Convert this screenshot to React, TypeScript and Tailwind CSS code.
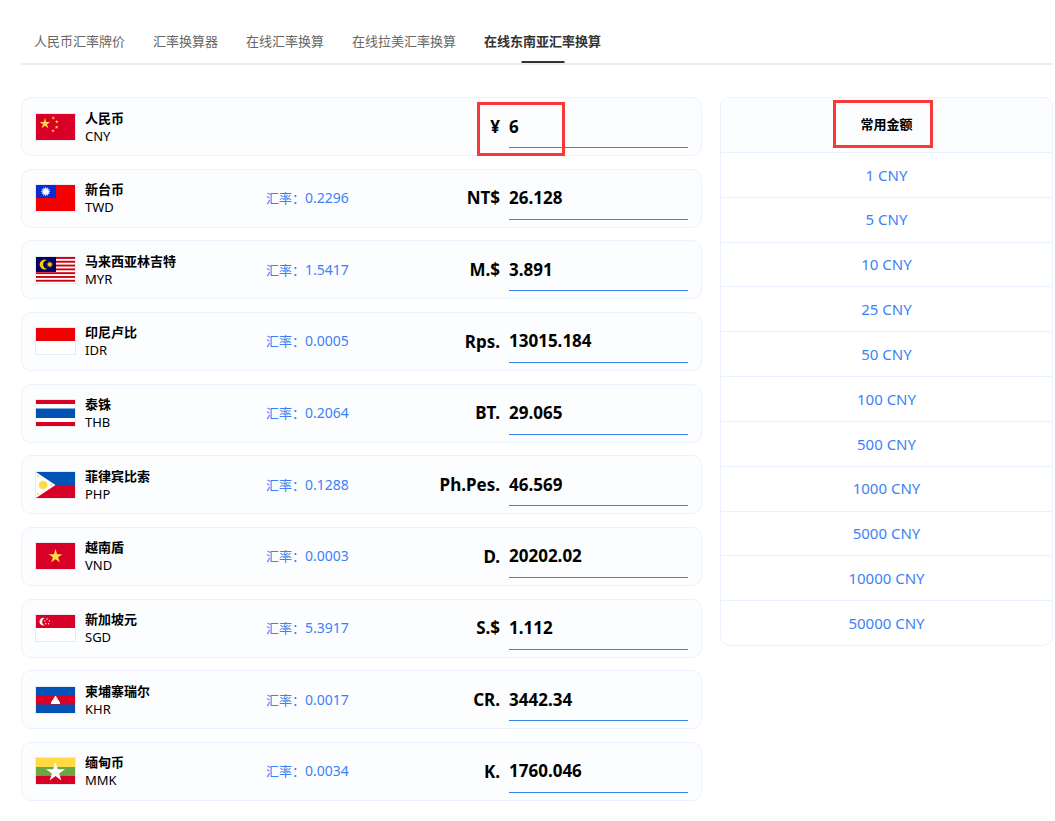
import { useState, type ReactNode } from 'react'

type Currency = {
  code: string
  name: string
  symbol: string
  rate?: string
  // value of 6 CNY in this currency
  base: number
}

const BASE_CODE = 'CNY'

const currencies: Currency[] = [
  { code: 'CNY', name: '人民币', symbol: '¥', base: 6 },
  { code: 'TWD', name: '新台币', symbol: 'NT$', rate: '0.2296', base: 26.128 },
  { code: 'MYR', name: '马来西亚林吉特', symbol: 'M.$', rate: '1.5417', base: 3.891 },
  { code: 'IDR', name: '印尼卢比', symbol: 'Rps.', rate: '0.0005', base: 13015.184 },
  { code: 'THB', name: '泰铢', symbol: 'BT.', rate: '0.2064', base: 29.065 },
  { code: 'PHP', name: '菲律宾比索', symbol: 'Ph.Pes.', rate: '0.1288', base: 46.569 },
  { code: 'VND', name: '越南盾', symbol: 'D.', rate: '0.0003', base: 20202.02 },
  { code: 'SGD', name: '新加坡元', symbol: 'S.$', rate: '5.3917', base: 1.112 },
  { code: 'KHR', name: '柬埔寨瑞尔', symbol: 'CR.', rate: '0.0017', base: 3442.34 },
  { code: 'MMK', name: '缅甸币', symbol: 'K.', rate: '0.0034', base: 1760.046 },
]

const amounts = [1, 5, 10, 25, 50, 100, 500, 1000, 5000, 10000, 50000]

const tabs = ['人民币汇率牌价', '汇率换算器', '在线汇率换算', '在线拉美汇率换算', '在线东南亚汇率换算']

function star(cx: number, cy: number, r: number, points = 5, inner = 0.382) {
  const out: string[] = []

  for (let i = 0; i < points * 2; i++) {
    const radius = i % 2 === 0 ? r : r * inner
    const angle = (Math.PI * i) / points - Math.PI / 2
    out.push(`${(cx + radius * Math.cos(angle)).toFixed(2)},${(cy + radius * Math.sin(angle)).toFixed(2)}`)
  }

  return out.join(' ')
}

const flags: Record<string, ReactNode> = {
  CNY: (
    <>
      <rect width="39" height="26" fill="#d80027" />
      <g fill="#ffda44">
        <polygon points={star(9, 9.7, 5.6)} />
        <polygon points={star(17.3, 4, 1.9)} />
        <polygon points={star(20.8, 7.7, 1.9)} />
        <polygon points={star(20.6, 13.2, 1.9)} />
        <polygon points={star(17, 16.8, 1.9)} />
      </g>
    </>
  ),
  TWD: (
    <>
      <rect width="39" height="26" fill="#f40000" />
      <rect width="20" height="13" fill="#0a2bd0" />
      <polygon points={star(9.7, 6.6, 5, 12, 0.65)} fill="#c6d0f8" />
      <circle cx="9.7" cy="6.6" r="2.7" fill="#fff" />
    </>
  ),
  MYR: (
    <>
      <rect width="39" height="26" fill="#fff" />
      {[0, 1, 2, 3, 4, 5, 6].map((i) => (
        <rect key={i} y={i * 3.8} width="39" height="1.9" fill="#cc0010" />
      ))}
      <rect width="20" height="15" fill="#010066" />
      <path d="M11.2 3.3a4.9 4.9 0 1 0 0 8.4 4.2 4.2 0 1 1 0-8.4Z" fill="#fc0" />
      <polygon points={star(13.8, 7.5, 3.6, 11, 0.45)} fill="#fc0" />
    </>
  ),
  IDR: (
    <>
      <rect width="39" height="26" fill="#fff" />
      <rect width="39" height="13" fill="#f00000" />
    </>
  ),
  THB: (
    <>
      <rect width="39" height="26" fill="#fff" />
      <rect width="39" height="4" fill="#d80027" />
      <rect y="8.5" width="39" height="9.5" fill="#0052b4" />
      <rect y="22" width="39" height="4" fill="#d80027" />
    </>
  ),
  PHP: (
    <>
      <rect width="39" height="13" fill="#0052b4" />
      <rect y="13" width="39" height="13" fill="#d80027" />
      <path d="M0 0 19.5 13 0 26Z" fill="#fff" />
      <g fill="#ffda44">
        <polygon points={star(7.2, 13, 5, 12, 0.75)} />
        <circle cx="2" cy="4" r="1.1" />
        <circle cx="2" cy="22" r="1.1" />
        <circle cx="15.6" cy="13" r="1.1" />
      </g>
    </>
  ),
  VND: (
    <>
      <rect width="39" height="26" fill="#d80027" />
      <polygon points={star(19.5, 13.4, 7.3)} fill="#ffda44" />
    </>
  ),
  SGD: (
    <>
      <rect width="39" height="26" fill="#fff" />
      <rect width="39" height="13" fill="#d80027" />
      <path d="M8.6 3a3.9 3.9 0 1 0 0 7.4 4 4 0 0 1 0-7.4Z" fill="#fff" />
      <g fill="#fff">
        <circle cx="11" cy="4" r="0.7" />
        <circle cx="13.4" cy="5.9" r="0.7" />
        <circle cx="12.5" cy="8.8" r="0.7" />
        <circle cx="9.6" cy="8.8" r="0.7" />
        <circle cx="8.8" cy="5.9" r="0.7" />
      </g>
    </>
  ),
  KHR: (
    <>
      <rect width="39" height="26" fill="#0052b4" />
      <rect y="9" width="39" height="8.5" fill="#d80027" />
      <path
        d="M15 17v-2.2h1v-1.9h1.3v-1.6h1V10l1.2-1.2L20.7 10v1.3h1v1.6H23v1.9h1V17Z"
        fill="#fff"
      />
    </>
  ),
  MMK: (
    <>
      <rect width="39" height="26" fill="#ffda44" />
      <rect y="9" width="39" height="8.7" fill="#6da544" />
      <rect y="17.7" width="39" height="8.3" fill="#d80027" />
      <polygon points={star(19.5, 14.3, 10)} fill="#fff" />
    </>
  ),
}

function Flag({ code }: { code: string }) {
  return (
    <svg
      viewBox="0 0 39 26"
      preserveAspectRatio="none"
      className="h-7 w-[41px] shrink-0 border border-[#e8eaf0]"
      aria-hidden="true"
    >
      {flags[code]}
    </svg>
  )
}

function CurrencyRow({
  currency,
  value,
  onChange,
  marked,
}: {
  currency: Currency
  value: string
  onChange: (v: string) => void
  marked?: boolean
}) {
  const id = `amount-${currency.code}`

  return (
    <li className="grid h-[59px] grid-cols-[231px_1fr_179px] items-center rounded-[10px] border border-[#ebf1fe] bg-[#fbfdff] px-[13px]">
      <div className="flex items-center gap-[9px]">
        <Flag code={currency.code} />
        <div className="text-[13px] leading-[18px]">
          <div className="font-bold">{currency.name}</div>
          <div>{currency.code}</div>
        </div>
      </div>

      <div className="flex items-center justify-between pr-[9px]">
        <span className="text-sm text-[#3b82f6]">
          {currency.rate && (
            <>
              <span className="text-[13px]">汇率：</span>
              {currency.rate}
            </>
          )}
        </span>
        <label htmlFor={id} className="text-[17px] font-bold">
          {currency.symbol}
        </label>
      </div>

      <div className="relative">
        <input
          id={id}
          value={value}
          onChange={(e) => onChange(e.target.value)}
          className="block h-[43px] w-full border-b border-[#3b82e6] bg-transparent text-[17px] font-bold outline-none"
        />
        {marked && (
          <div className="pointer-events-none absolute -top-[3px] -left-8 h-[54px] w-[88px] border-3 border-[#fa3838]" />
        )}
      </div>
    </li>
  )
}

export default function App() {
  const [source, setSource] = useState({ code: BASE_CODE, text: '6' })

  function valueOf(currency: Currency) {
    if (currency.code === source.code) {
      return source.text
    }

    const from = currencies.find((c) => c.code === source.code)!
    const result = (Number(source.text) * currency.base) / from.base

    return Number.isFinite(result) ? String(Number(result.toFixed(3))) : ''
  }

  return (
    <div className="min-h-screen bg-white pt-[21px] pr-[2px] pb-5 pl-[21px] font-['Noto_Sans','Noto_Sans_CJK_SC',sans-serif] text-black">
      <nav className="flex h-11 gap-7 border-b-2 border-[#ebeded] pl-[13px] text-[13px]">
        {tabs.map((tab, i) => (
          <a
            key={tab}
            href="#"
            className={
              i === tabs.length - 1
                ? 'relative flex items-center font-bold text-[#333]'
                : 'flex items-center text-[#666]'
            }
          >
            {tab}
            {i === tabs.length - 1 && (
              <span className="absolute bottom-0 left-1/2 h-0.5 w-[43px] -translate-x-1/2 bg-[#333]" />
            )}
          </a>
        ))}
      </nav>

      <main className="mt-8 grid grid-cols-[1fr_333px] items-start gap-[18px]">
        <ul className="flex min-h-[704px] flex-col justify-between">
          {currencies.map((c) => (
            <CurrencyRow
              key={c.code}
              currency={c}
              value={valueOf(c)}
              onChange={(text) => setSource({ code: c.code, text })}
              marked={c.code === BASE_CODE}
            />
          ))}
        </ul>

        <aside className="flex min-h-[549px] flex-col overflow-hidden rounded-[10px] border border-[#ebf1fe]">
          <h2 className="flex h-[54px] items-center justify-center bg-[#fbfdff] text-[13px] font-bold">
            <span className="relative">
              常用金额
              <span className="pointer-events-none absolute -top-[15px] -left-[27px] h-12 w-[100px] border-3 border-[#fa3838]" />
            </span>
          </h2>
          <ul className="flex grow flex-col">
            {amounts.map((amount) => (
              <li key={amount} className="flex grow border-t border-[#ebf1fe]">
                <button
                  type="button"
                  onClick={() => setSource({ code: BASE_CODE, text: String(amount) })}
                  className="w-full cursor-pointer py-2 text-[15px] text-[#3b82f6]"
                >
                  {amount} CNY
                </button>
              </li>
            ))}
          </ul>
        </aside>
      </main>
    </div>
  )
}
